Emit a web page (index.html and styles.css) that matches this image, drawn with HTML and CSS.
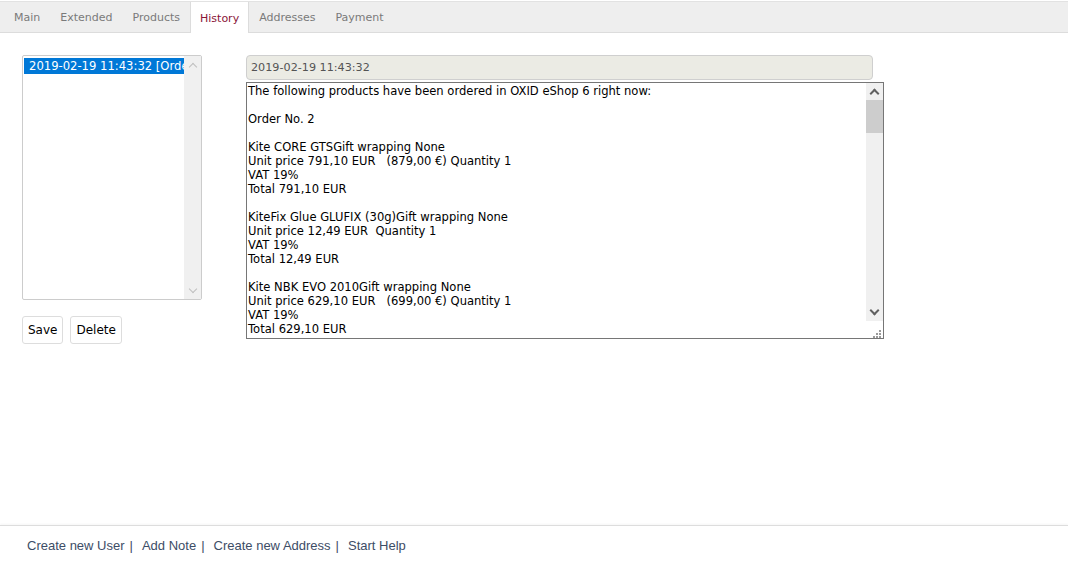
FILE: index.html
```html
<!DOCTYPE html>
<html>
<head>
<meta charset="utf-8">
<link rel="stylesheet" href="styles.css">
</head>
<body>
<div class="page">
  <div class="tabs">
    <span class="tab">Main</span>
    <span class="tab">Extended</span>
    <span class="tab">Products</span>
    <span class="tab active">History</span>
    <span class="tab">Addresses</span>
    <span class="tab">Payment</span>
  </div>
  <div class="main">
    <div class="left">
      <div class="listbox">
        <div class="options">
          <div class="option selected">2019-02-19 11:43:32 [Order No. 2]</div>
        </div>
        <div class="vscroll disabled">
          <span class="arrow up"></span>
          <span class="track"></span>
          <span class="arrow down"></span>
        </div>
      </div>
      <div class="buttons">
        <button class="btn">Save</button>
        <button class="btn">Delete</button>
      </div>
    </div>
    <div class="right">
      <div class="subject">2019-02-19 11:43:32</div>
      <div class="textarea">
        <div class="text">The following products have been ordered in OXID eShop 6 right now:

Order No. 2

Kite CORE GTSGift wrapping None
Unit price 791,10 EUR   (879,00 €) Quantity 1
VAT 19%
Total 791,10 EUR

KiteFix Glue GLUFIX (30g)Gift wrapping None
Unit price 12,49 EUR  Quantity 1
VAT 19%
Total 12,49 EUR

Kite NBK EVO 2010Gift wrapping None
Unit price 629,10 EUR   (699,00 €) Quantity 1
VAT 19%
Total 629,10 EUR
</div>
        <div class="vscroll">
          <span class="arrow up"></span>
          <span class="thumb"></span>
          <span class="track"></span>
          <span class="arrow down"></span>
          <span class="grip">
            <svg width="17" height="17" viewBox="0 0 17 17">
              <g fill="#9a9a9a">
                <rect x="13" y="9" width="2" height="2"/>
                <rect x="10" y="12" width="2" height="2"/>
                <rect x="13" y="12" width="2" height="2"/>
                <rect x="7" y="15" width="2" height="2"/>
                <rect x="10" y="15" width="2" height="2"/>
                <rect x="13" y="15" width="2" height="2"/>
              </g>
            </svg>
          </span>
        </div>
      </div>
    </div>
  </div>
  <div class="footer">
    <a class="link">Create new User</a><span class="sep">|</span>
    <a class="link">Add Note</a><span class="sep">|</span>
    <a class="link">Create new Address</a><span class="sep">|</span>
    <a class="link">Start Help</a>
  </div>
</div>
</body>
</html>
```

FILE: styles.css
```css
html, body {
  margin: 0;
  padding: 0;
  background: #fff;
}
.page {
  height: 564px;
  display: flex;
  flex-direction: column;
  font-family: "DejaVu Sans", Verdana, sans-serif;
}
.tabs {
  display: flex;
  align-items: stretch;
  margin-top: 1px;
  height: 30px;
  padding-left: 4px;
  background: #eeeeee;
  border-top: 1px solid #e2e2e2;
  border-bottom: 1px solid #dcdcdc;
  font-size: 11px;
}
.tab {
  display: flex;
  align-items: center;
  padding: 1px 10px 0;
  color: #7a7a7a;
}
.tab.active {
  background: #fff;
  color: #8a1538;
  border-left: 1px solid #dcdcdc;
  border-right: 1px solid #dcdcdc;
  padding: 1px 9px 0;
  margin-bottom: -1px;
}
.main {
  flex: 1;
  display: flex;
  gap: 44px;
  padding: 22px 0 0 22px;
}
.left {
  width: 180px;
  display: flex;
  flex-direction: column;
  gap: 16px;
}
.listbox {
  height: 243px;
  border: 1px solid #cccccc;
  border-radius: 2px;
  display: flex;
  overflow: hidden;
}
.options {
  flex: 1;
  padding: 2px 0 0 1px;
  overflow: hidden;
  font-size: 11.6px;
}
.option {
  white-space: nowrap;
  height: 16px;
  line-height: 16px;
  padding-left: 5px;
  overflow: hidden;
}
.option.selected {
  background: #0078d7;
  color: #fff;
}
.vscroll {
  width: 17px;
  background: #f0f0f0;
  display: flex;
  flex-direction: column;
  position: relative;
}
.arrow {
  height: 17px;
  display: flex;
  align-items: center;
  justify-content: center;
}
.arrow::before {
  content: "";
  width: 5px;
  height: 5px;
  border-left: 2px solid #606060;
  border-top: 2px solid #606060;
  transform: translateY(2px) rotate(45deg);
}
.arrow.down::before {
  transform: translateY(-2px) rotate(225deg);
}
.vscroll.disabled .arrow::before {
  border-color: #bfbfbf;
  border-width: 1px;
}
.track {
  flex: 1;
}
.thumb {
  height: 33px;
  background: #cdcdcd;
}
.buttons {
  display: flex;
  gap: 7px;
}
.btn {
  height: 28px;
  padding: 0 5px;
  border: 1px solid #dddddd;
  border-radius: 3px;
  background: #fff;
  font-family: "DejaVu Sans", Verdana, sans-serif;
  font-size: 12px;
  color: #000;
}
.right {
  width: 638px;
  display: flex;
  flex-direction: column;
  gap: 2px;
}
.subject {
  width: 621px;
  height: 23px;
  line-height: 23px;
  padding-left: 4px;
  background: #ebebe4;
  border: 1px solid #cfcfcf;
  border-radius: 4px;
  color: #545454;
  font-size: 11.2px;
}
.textarea {
  height: 255px;
  border: 1px solid #767676;
  display: flex;
  overflow: hidden;
}
.text {
  flex: 1;
  padding: 1px 0 0 1px;
  white-space: pre;
  font-size: 11.55px;
  line-height: 14px;
  color: #000;
  overflow: hidden;
}
.grip {
  height: 17px;
  background: #fff;
  display: block;
}
.grip svg {
  display: block;
}
.footer {
  height: 38px;
  border-top: 1px solid #dddddd;
  box-shadow: 0 -1px 2px rgba(0,0,0,0.04);
  display: flex;
  align-items: center;
  padding-left: 27px;
  font-family: "Liberation Sans", Arial, sans-serif;
  font-size: 13px;
  color: #3d4d66;
}
.link {
  color: #3d4d66;
}
.sep {
  margin: 0 9px 0 5px;
}
```
